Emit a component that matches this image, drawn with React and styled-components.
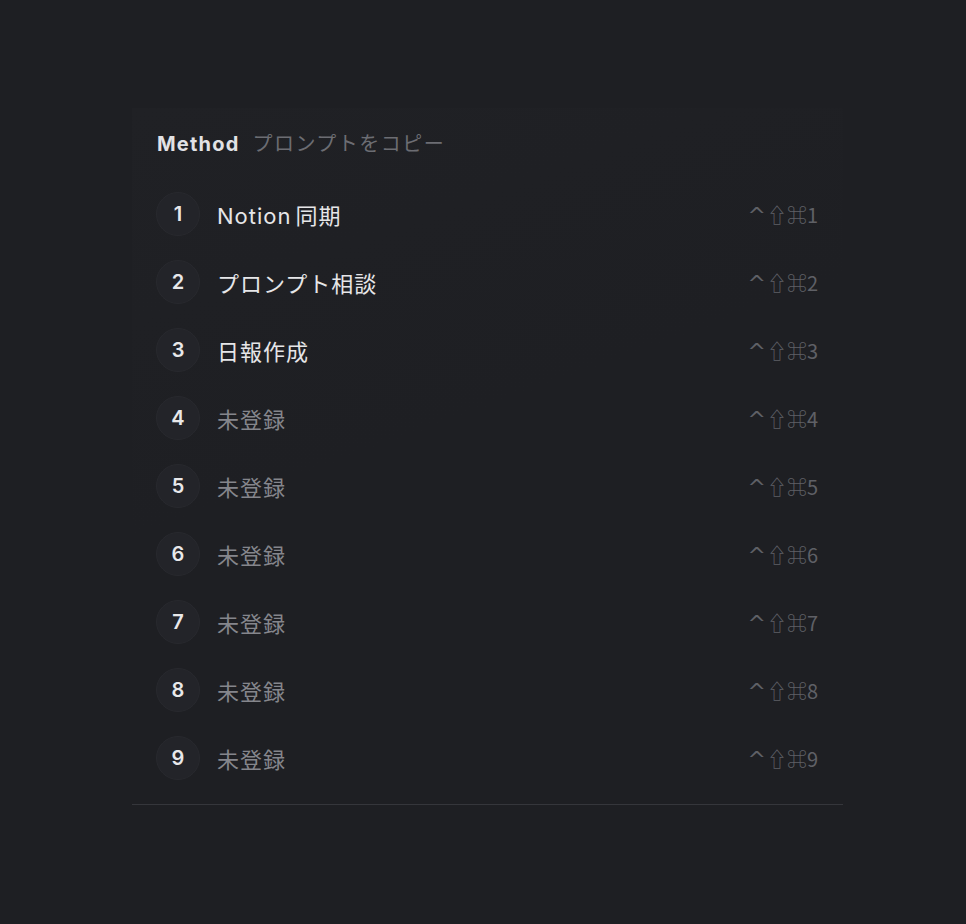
import React from 'react';
import styled, { createGlobalStyle } from 'styled-components';

const GlobalStyle = createGlobalStyle`
  html, body {
    margin: 0;
    padding: 0;
    background: #1e1f23;
  }
  body {
    font-family: Inter, "Noto Sans CJK JP", sans-serif;
  }
`;

const Page = styled.div`
  width: 966px;
  height: 924px;
  padding: 108px 0 0 132px;
  box-sizing: border-box;
  display: flex;
  align-items: flex-start;
`;

const Card = styled.div`
  width: 711px;
  box-sizing: border-box;
  padding: 22px 25px 12px 24px;
  background: linear-gradient(160deg, #202125 0%, #1e1f23 45%);
  border-bottom: 1px solid #35363b;
`;

const Header = styled.div`
  display: flex;
  align-items: baseline;
  gap: 13px;
  height: 26px;
  line-height: 26px;
  margin-left: 1px;
`;

const Title = styled.span`
  font-size: 20px;
  font-weight: 700;
  color: #e2e2e5;
  letter-spacing: 1.2px;
`;

const Subtitle = styled.span`
  font-size: 20px;
  color: #6c6d73;
  font-family: "Noto Sans CJK JP", sans-serif;
  letter-spacing: 1.5px;
`;

const List = styled.div`
  margin-top: 24px;
  display: flex;
  flex-direction: column;
`;

const Row = styled.div`
  height: 68px;
  display: flex;
  align-items: center;
`;

const Num = styled.div`
  width: 44px;
  height: 44px;
  border-radius: 50%;
  background: #232429;
  border: 1px solid #28292e;
  box-sizing: border-box;
  display: flex;
  align-items: center;
  justify-content: center;
  font-size: 20px;
  font-weight: 600;
  color: #e8e8ea;
`;

const Label = styled.div`
  margin-left: 17px;
  font-size: 22px;
  letter-spacing: 1px;
  color: ${p => (p.$empty ? '#85868c' : '#e6e6e8')};
  flex: 1;
`;

const Latin = styled.span`
  margin-right: 4px;
`;

const Keys = styled.div`
  font-family: "Noto Sans CJK JP", "DejaVu Sans", sans-serif;
  font-size: 20px;
  color: #5f6066;
`;

const Ctrl = styled.span`
  font-family: "DejaVu Sans", sans-serif;
  font-size: 22px;
  margin-right: 1px;
`;

const items = [
  'Notion同期',
  'プロンプト相談',
  '日報作成',
  '未登録',
  '未登録',
  '未登録',
  '未登録',
  '未登録',
  '未登録',
];

const renderName = name => {
  const m = name.match(/^([A-Za-z]+)(.*)$/);
  if (!m) return name;
  return (
    <>
      <Latin>{m[1]}</Latin>
      {m[2]}
    </>
  );
};

const App = () => (
  <>
    <GlobalStyle />
    <Page>
      <Card>
        <Header>
          <Title>Method</Title>
          <Subtitle>プロンプトをコピー</Subtitle>
        </Header>
        <List>
          {items.map((name, i) => (
            <Row key={i}>
              <Num>{i + 1}</Num>
              <Label $empty={name === '未登録'}>{renderName(name)}</Label>
              <Keys>
                <Ctrl>^</Ctrl>⇧⌘{i + 1}
              </Keys>
            </Row>
          ))}
        </List>
      </Card>
    </Page>
  </>
);

export default App;
